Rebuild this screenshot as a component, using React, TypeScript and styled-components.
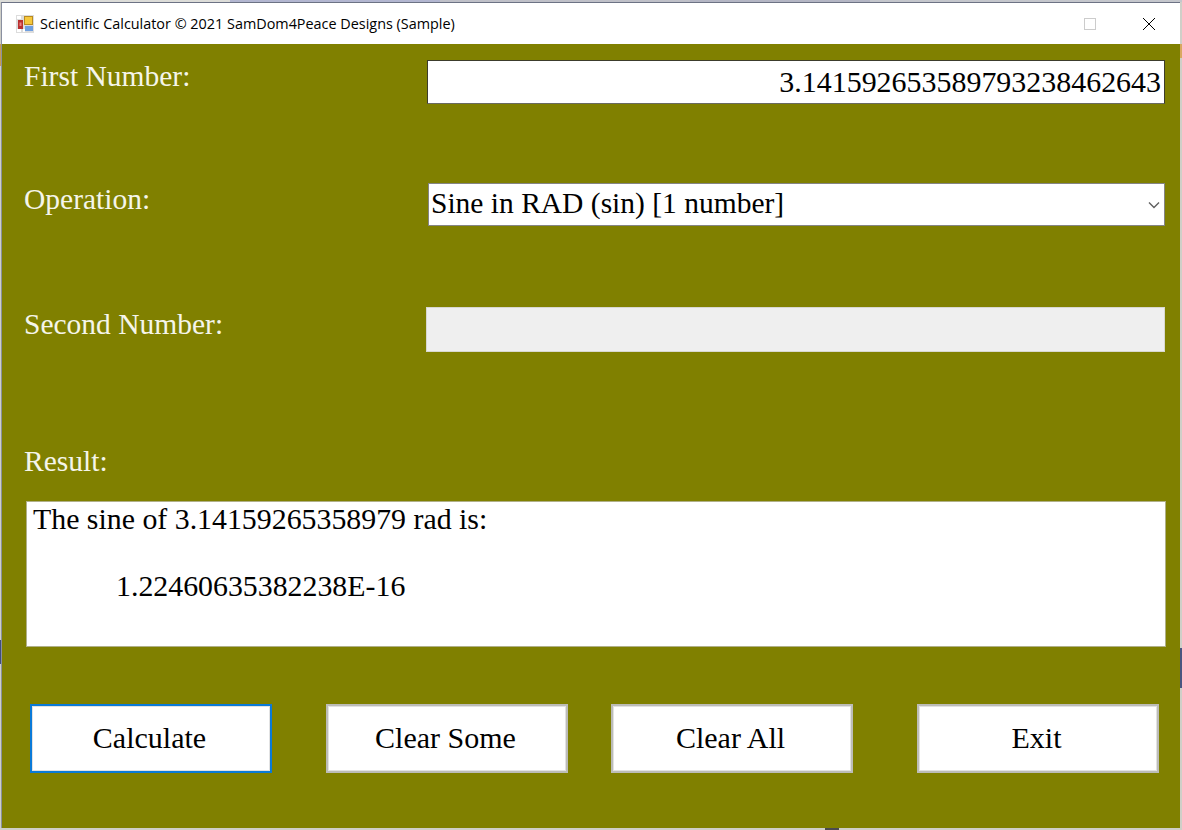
import styled, { createGlobalStyle } from "styled-components";

const serif = `"Liberation Serif", "Times New Roman", serif`;

const firstNumber = "3.14159265358979323846" + "2643";

const GlobalStyle = createGlobalStyle`
  html, body {
    margin: 0;
    padding: 0;
    background: #d0d0d0;
  }
`;

// sliver of the desktop that shows round the captured window
const Desktop = styled.div`
  width: 1182px;
  height: 830px;
  box-sizing: border-box;
  padding: 2px 2px 2px 1px;
  overflow: hidden;
  background-color: #cfcfc8;
  background-repeat: no-repeat;
  background-image:
    linear-gradient(to right, #dcdcd8 0 230px, #b2b6d0 230px 440px, #bfc0c8 440px 690px, #b4b6c4 690px 870px, #c4c6cc 870px),
    linear-gradient(#3f4c7c, #3f4c7c),
    linear-gradient(#c89a50, #c89a50),
    linear-gradient(#4a5680, #4a5680),
    linear-gradient(#d8a860, #d8a860),
    linear-gradient(#4a4a50, #4a4a50);
  background-size:
    100% 2px,
    1px 24px,
    1px 22px,
    2px 40px,
    2px 14px,
    14px 2px;
  background-position:
    0 0,
    0 640px,
    0 44px,
    1180px 648px,
    1180px 44px,
    825px 828px;
`;

const Window = styled.div`
  height: 100%;
  box-sizing: border-box;
  display: flex;
  flex-direction: column;
  background: #808000;
  border-left: 1px solid #8a90a0;
  border-top: 1px solid #6c7284;
`;

const TitleBar = styled.div`
  height: 41px;
  flex: none;
  display: flex;
  align-items: center;
  background: #ffffff;
  padding-left: 14px;
`;

const AppIcon = styled.svg`
  width: 18px;
  height: 18px;
  flex: none;
`;

const Title = styled.span`
  margin-left: 6px;
  font: 14.4px "Open Sans", "Noto Sans", sans-serif;
  color: #000000;
  white-space: nowrap;
`;

const WindowButtons = styled.div`
  margin-left: auto;
  padding-right: 2px;
  display: flex;
  align-items: center;
`;

const WindowButton = styled.div`
  width: 59px;
  height: 41px;
  display: flex;
  align-items: center;
  justify-content: center;
`;

const Form = styled.div`
  flex: 1;
  display: flex;
  flex-direction: column;
  padding: 0 15px 0 22px;
`;

const Row = styled.div<{ $top: number }>`
  display: flex;
  align-items: flex-start;
  margin-top: ${({ $top }) => $top}px;
`;

const Label = styled.div<{ $width: number; $lineHeight: number }>`
  flex: none;
  width: ${({ $width }) => $width}px;
  font: 29.5px/${({ $lineHeight }) => $lineHeight}px ${serif};
  color: #f5f5ea;
`;

const NumberBox = styled.div`
  flex: 1;
  box-sizing: border-box;
  height: 44px;
  padding: 0 3px;
  background: #ffffff;
  border: 1.5px solid #3c3c2c;
  border-bottom-color: #6a6a60;
  font: 29.95px/41px ${serif};
  color: #000000;
  text-align: right;
  white-space: nowrap;
`;

const SelectBox = styled.div`
  flex: 1;
  box-sizing: border-box;
  height: 43px;
  display: flex;
  align-items: center;
  padding: 0 4px 3px 2px;
  background: #ffffff;
  border: 1.5px solid #858585;
  font: 29.5px/36px ${serif};
  color: #000000;
  white-space: nowrap;
`;

const Chevron = styled.svg`
  width: 12px;
  height: 8px;
  margin: 3px 0 0 auto;
  flex: none;
`;

const DisabledBox = styled.div`
  flex: 1;
  box-sizing: border-box;
  height: 45px;
  background: #efefef;
  border: 1.5px solid #d8d8d0;
`;

const ResultLabel = styled.div`
  margin-top: 93px;
  font: 29.5px/32px ${serif};
  color: #f5f5ea;
`;

const ResultBox = styled.div`
  box-sizing: border-box;
  height: 146px;
  margin: 24px -1px 0 2px;
  padding: 0 6px;
  background: #ffffff;
  border: 1px solid #b0b088;
  font: 29.85px/34px ${serif};
  color: #000000;
`;

const ResultLine = styled.div<{ $indent?: number; $top?: number }>`
  margin-left: ${({ $indent }) => $indent ?? 0}px;
  margin-top: ${({ $top }) => $top ?? 0}px;
`;

const Buttons = styled.div`
  display: flex;
  margin-top: 57px;
  padding-left: 6px;
`;

const ActionButton = styled.div<{ $focused?: boolean; $left: number }>`
  box-sizing: border-box;
  width: 242px;
  height: 69px;
  margin-left: ${({ $left }) => $left}px;
  padding: 0 3px 2px 0;
  display: flex;
  align-items: center;
  justify-content: center;
  background: #ffffff;
  border: 2px solid ${({ $focused }) => ($focused ? "#0a7ad8" : "#bcbcb8")};
  box-shadow: inset 0 0 0 1px #e2e2e2;
  font: 30px/34px ${serif};
  color: #000000;
`;

export default function App() {
  return (
    <Desktop>
      <GlobalStyle />
      <Window>
        <TitleBar>
          <AppIcon viewBox="0 0 18 18">
            <rect x="0" y="0" width="18" height="18" fill="#dcdcdc" />
            <rect x="1" y="1" width="4" height="3" fill="#ffffff" />
            <rect x="1" y="14" width="4" height="3" fill="#ffffff" />
            <rect x="7" y="14" width="2" height="3" fill="#ffffff" />
            <rect x="2" y="5" width="5" height="9" fill="#b83030" />
            <rect x="3.5" y="7.5" width="2" height="3.5" fill="#f08080" />
            <rect x="8" y="1" width="9" height="9" fill="#b88a20" />
            <rect x="9" y="2" width="7" height="7" fill="#f6c83c" />
            <rect x="9" y="11" width="8" height="5" fill="#6f9fe0" />
          </AppIcon>
          <Title>Scientific Calculator © 2021 SamDom4Peace Designs (Sample)</Title>
          <WindowButtons>
            <WindowButton>
              <svg width="12" height="12" viewBox="0 0 12 12">
                <rect x="0.5" y="0.5" width="11" height="11" fill="none" stroke="#cccccc" />
              </svg>
            </WindowButton>
            <WindowButton>
              <svg width="12" height="12" viewBox="0 0 12 12">
                <path d="M0 0 L12 12 M12 0 L0 12" stroke="#000000" strokeWidth="1" />
              </svg>
            </WindowButton>
          </WindowButtons>
        </TitleBar>
        <Form>
          <Row $top={16}>
            <Label $width={403} $lineHeight={32}>First Number:</Label>
            <NumberBox>{firstNumber}</NumberBox>
          </Row>
          <Row $top={79}>
            <Label $width={404} $lineHeight={32}>Operation:</Label>
            <SelectBox>
              Sine in RAD (sin) [1 number]
              <Chevron viewBox="0 0 12 8">
                <path d="M1 1.5 L6 6.5 L11 1.5" fill="none" stroke="#606060" strokeWidth="1.4" />
              </Chevron>
            </SelectBox>
          </Row>
          <Row $top={81}>
            <Label $width={402} $lineHeight={34}>Second Number:</Label>
            <DisabledBox />
          </Row>
          <ResultLabel>Result:</ResultLabel>
          <ResultBox>
            <ResultLine>The sine of 3.14159265358979 rad is:</ResultLine>
            <ResultLine $indent={83} $top={33}>1.22460635382238E-16</ResultLine>
          </ResultBox>
          <Buttons>
            <ActionButton $focused $left={0}>Calculate</ActionButton>
            <ActionButton $left={54}>Clear Some</ActionButton>
            <ActionButton $left={43}>Clear All</ActionButton>
            <ActionButton $left={64}>Exit</ActionButton>
          </Buttons>
        </Form>
      </Window>
    </Desktop>
  );
}
